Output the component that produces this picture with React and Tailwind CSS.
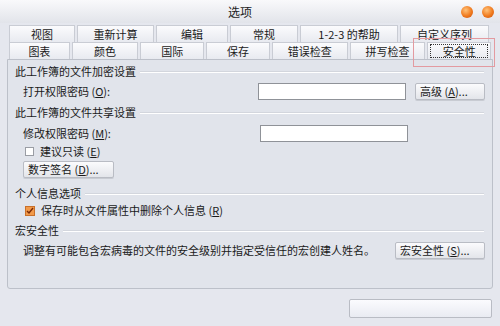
const font = { fontFamily: '"Noto Sans CJK SC", "Noto Sans", sans-serif' };

function Tab({ label, w, active }) {
  return (
    <div
      className={`flex h-[17px] items-center justify-center border-x border-t border-[#c9ccd4] bg-gradient-to-b from-[#fbfbfd] to-[#e8eaf0] text-[11px] leading-[13px] whitespace-nowrap text-[#1a1a1a] ${w}`}
    >
      {active ? (
        <span className="flex h-[14px] w-[58px] items-center justify-center border border-dotted border-[#333]">{label}</span>
      ) : (
        label
      )}
    </div>
  );
}

function Btn({ children, className }) {
  return (
    <div
      className={`flex h-[17px] items-center rounded-[2px] border border-[#b9bcc4] bg-gradient-to-b from-[#fbfbfd] to-[#e3e5ea] px-[4px] text-[11px] leading-[13px] whitespace-nowrap text-[#1a1a1a] shadow-[0_1px_0_#c8cbd2] ${className}`}
    >
      {children}
    </div>
  );
}

function Heading({ children, className }) {
  return (
    <div className={`flex h-[13px] items-center gap-1 pl-[7px] pr-[8px] ${className || ""}`}>
      <span className="text-[11px] leading-[13px] text-[#1a1a1a] whitespace-nowrap">{children}</span>
      <div className="h-[2px] flex-1 border-t border-[#d3d6dd] border-b-white border-b" />
    </div>
  );
}

export default function App() {
  return (
    <div className="flex h-[326px] w-[500px] flex-col bg-[#e5e7ee]" style={font}>
      {/* title bar */}
      <div className="relative flex h-[23px] items-center justify-center bg-gradient-to-b from-[#f9f9fb] to-[#e2e4ea]">
        <span className="ml-[-20px] text-[12px] leading-[14px] text-[#222]">选项</span>
        <div className="absolute right-[6px] top-[6px] flex gap-[9px]">
          <div className="h-[12px] w-[12px] rounded-full bg-[radial-gradient(circle_at_40%_35%,#ffc27a,#f07a1e_55%,#c9500c)]" />
          <div className="h-[12px] w-[12px] rounded-full bg-[radial-gradient(circle_at_40%_35%,#ffc27a,#f07a1e_55%,#c9500c)]" />
        </div>
      </div>

      {/* tabs */}
      <div className="relative mt-[2px] px-[9px]">
        <div className="flex gap-[2px]">
          <Tab label="视图" w="w-[66px]" />
          <Tab label="重新计算" w="w-[77px]" />
          <Tab label="编辑" w="w-[72px]" />
          <Tab label="常规" w="w-[68px]" />
          <Tab label="1-2-3 的帮助" w="w-[98px]" />
          <Tab label="自定义序列" w="w-[89px]" />
        </div>
        <div className="flex gap-[2px]">
          <Tab label="图表" w="w-[61px]" />
          <Tab label="颜色" w="w-[67px]" />
          <Tab label="国际" w="w-[64px]" />
          <Tab label="保存" w="w-[64px]" />
          <Tab label="错误检查" w="w-[76px]" />
          <Tab label="拼写检查" w="w-[76px]" />
          <Tab label="安全性" w="w-[64px]" active />
        </div>
        <div className="absolute left-[413px] top-[13px] h-[29px] w-[82px] border border-[#e39aa0]" />
      </div>

      {/* panel */}
      <div className="mx-[7px] flex h-[230px] flex-col rounded-b-[3px] border border-[#bcc0c9] bg-[#e1e4eb] pt-[5px] text-[11px] leading-[13px] text-[#1a1a1a]">
        <Heading>此工作簿的文件加密设置</Heading>
        <div className="mt-[5px] flex items-center pl-[15px] pr-[7px]">
          <span>打开权限密码 (<u>O</u>):</span>
          <div className="ml-auto h-[17px] w-[148px] border border-[#8f9298] bg-white" />
          <Btn className="ml-[9px] w-[70px]">高级 (<u>A</u>)...</Btn>
        </div>
        <Heading className="mt-[6px]">此工作簿的文件共享设置</Heading>
        <div className="mt-[6px] flex items-center pl-[15px] pr-[84px]">
          <span>修改权限密码 (<u>M</u>):</span>
          <div className="ml-auto h-[17px] w-[148px] border border-[#8f9298] bg-white" />
        </div>
        <div className="mt-[3px] flex h-[13px] items-center gap-[6px] pl-[17px]">
          <div className="h-[9px] w-[9px] border border-[#9a9da4] bg-white" />
          <span>建议只读 (<u>E</u>)</span>
        </div>
        <div className="mt-[3px] pl-[15px]">
          <Btn className="w-[91px]">数字签名 (<u>D</u>)...</Btn>
        </div>
        <Heading className="mt-[9px]">个人信息选项</Heading>
        <div className="mt-[4px] flex h-[13px] items-center gap-[6px] pl-[17px]">
          <div className="flex h-[10px] w-[10px] items-center justify-center border border-[#c8702a] bg-[#f29a4a]">
            <svg width="8" height="8" viewBox="0 0 8 8">
              <path d="M1 4 L3 6 L7 1" stroke="#7a2a05" strokeWidth="1.4" fill="none" />
            </svg>
          </div>
          <span>保存时从文件属性中删除个人信息 (<u>R</u>)</span>
        </div>
        <Heading className="mt-[7px]">宏安全性</Heading>
        <div className="mt-[5px] flex items-center pl-[15px] pr-[7px]">
          <span>调整有可能包含宏病毒的文件的安全级别并指定受信任的宏创建人姓名。</span>
          <Btn className="ml-auto w-[90px]">宏安全性 (<u>S</u>)...</Btn>
        </div>
      </div>

      {/* bottom */}
      <div className="mt-[10px] flex justify-end pr-[8px]">
        <div className="h-[19px] w-[143px] rounded-[2px] border border-[#b9bcc4] bg-gradient-to-b from-[#fbfbfe] to-[#e9ebf2]" />
      </div>
    </div>
  );
}
